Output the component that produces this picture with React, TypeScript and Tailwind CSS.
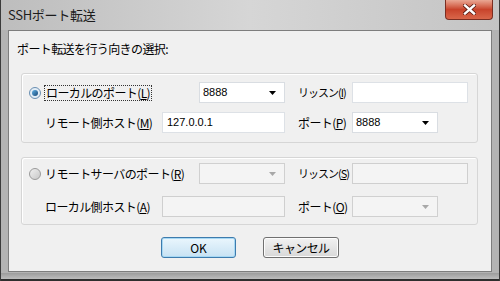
import React from "react";

const jp = "font-['Noto_Sans_CJK_JP','Noto_Sans',sans-serif]";

const Mn = ({ k }: { k: string }) => (
  <span>
    (<u>{k}</u>)
  </span>
);

const Arrow = ({ off }: { off?: boolean }) => (
  <svg width="7" height="4" viewBox="0 0 7 4" className="mr-[8px]">
    <path d="M0 0H7L3.5 4Z" fill={off ? "#a8a8a8" : "#000"} />
  </svg>
);

const Combo = ({ w, value, off }: { w: string; value?: string; off?: boolean }) => (
  <div
    className={`${w} h-[21px] flex items-center justify-between border ${
      off ? "border-[#d0d0d0] bg-[#f4f4f4]" : "border-[#d9dde2] bg-white"
    }`}
  >
    <span className="pl-[3px] text-[11px] tracking-normal font-['Liberation_Sans',sans-serif] text-black">{value}</span>
    <Arrow off={off} />
  </div>
);

const Field = ({ w, value, off }: { w: string; value?: string; off?: boolean }) => (
  <div
    className={`${w} h-[21px] flex items-center border ${
      off ? "border-[#cfcfcf] bg-[#f4f4f4]" : "border-[#dde1e6] bg-white"
    }`}
  >
    <span className="pl-[4px] text-[11px] tracking-normal font-['Liberation_Sans',sans-serif] text-black">{value}</span>
  </div>
);

const Radio = ({ on }: { on?: boolean }) => (
  <div
    className={`w-[12px] h-[12px] shrink-0 rounded-full border flex items-center justify-center ${
      on ? "border-[#6a8fb2] bg-[#e2edf6]" : "border-[#9a9a9a] bg-gradient-to-br from-[#f0f0f0] to-[#c8c8c8]"
    }`}
  >
    {on && <div className="w-[6px] h-[6px] rounded-full bg-gradient-to-br from-[#5fb0e6] to-[#1a4a78]" />}
  </div>
);

const App = () => {
  return (
    <div className={`w-[500px] h-[281px] flex flex-col bg-[#b3b3b3] border-x border-[#3b3b3b] whitespace-nowrap ${jp}`}>
      {/* title bar */}
      <div className="h-[30px] flex justify-between bg-gradient-to-r from-[#bdbdbd] via-[#d6d6d6] to-[#c4c4c4]">
        <span className="pl-[7px] pt-[7px] text-[13px] leading-[16px] tracking-[-0.3px] text-[#1c1c1c]">SSHポート転送</span>
        <div className="w-[48px] h-[20px] mr-[6px] rounded-b-[4px] border border-t-0 border-[#7a2e22] bg-gradient-to-b from-[#e9a794] via-[#c8432b] to-[#d9664a] flex items-center justify-center">
          <svg width="13" height="11" viewBox="0 0 13 11">
            <path d="M2 1.5L11 9.5M11 1.5L2 9.5" stroke="#5a1a10" strokeWidth="4" strokeLinecap="square" />
            <path d="M2 1.5L11 9.5M11 1.5L2 9.5" stroke="#fff" strokeWidth="2.4" strokeLinecap="square" />
          </svg>
        </div>
      </div>

      {/* client area */}
      <div className="ml-[7px] w-[484px] h-[242px] border border-[#7d7d7d] bg-[#f0f0f0] text-[12px] tracking-[-0.6px] text-black">
        <div className="pl-[8px] pt-[11px] leading-[14px]">ポート転送を行う向きの選択:</div>

        {/* group 1 */}
        <div className="mt-[17px] ml-[12px] w-[457px] h-[70px] border border-[#d6d6d6] rounded-[3px] shadow-[inset_1px_1px_0_#fff] flex flex-col gap-[9px] pt-[8px]">
          <div className="flex items-center h-[21px]">
            <div className="w-[177px] pl-[7px] flex items-center">
              <Radio on />
              <span className="ml-[3px] px-[1px] border border-dotted border-[#333] leading-[14px]">
                ローカルのポート<Mn k="L" />
              </span>
            </div>
            <Combo w="w-[86px]" value="8888" />
            <span className="ml-[13px] w-[54px] text-[11px] tracking-[-1px]">
              リッスン<Mn k="I" />
            </span>
            <Field w="w-[116px]" />
          </div>
          <div className="flex items-center h-[21px]">
            <span className="pl-[23px] w-[140px]">
              リモート側ホスト<Mn k="M" />
            </span>
            <Field w="w-[123px]" value="127.0.0.1" />
            <span className="ml-[13px] w-[54px]">
              ポート<Mn k="P" />
            </span>
            <Combo w="w-[86px]" value="8888" />
          </div>
        </div>

        {/* group 2 */}
        <div className="mt-[14px] ml-[12px] w-[457px] h-[68px] border border-[#d6d6d6] rounded-[3px] shadow-[inset_1px_1px_0_#fff] flex flex-col gap-[12px] pt-[5px]">
          <div className="flex items-center h-[21px]">
            <div className="w-[177px] pl-[7px] flex items-center">
              <Radio />
              <span className="ml-[4px] leading-[14px]">
                リモートサーバのポート<Mn k="R" />
              </span>
            </div>
            <Combo w="w-[86px]" off />
            <span className="ml-[13px] w-[54px] text-[11px] tracking-[-1px]">
              リッスン<Mn k="S" />
            </span>
            <Field w="w-[116px]" off />
          </div>
          <div className="flex items-center h-[21px]">
            <span className="pl-[23px] w-[140px]">
              ローカル側ホスト<Mn k="A" />
            </span>
            <Field w="w-[123px]" off />
            <span className="ml-[13px] w-[54px]">
              ポート<Mn k="O" />
            </span>
            <Combo w="w-[86px]" off />
          </div>
        </div>

        {/* buttons */}
        <div className="mt-[12px] flex justify-center gap-[27px]">
          <button className="w-[75px] h-[21px] rounded-[3px] border border-[#3d7bad] bg-gradient-to-b from-[#eaf6fd] to-[#c7e2f3] shadow-[inset_0_0_0_1px_#a6d8f4] text-[12px] leading-[14px] tracking-normal">
            OK
          </button>
          <button className="w-[76px] h-[21px] rounded-[3px] border border-[#707070] bg-gradient-to-b from-[#f2f2f2] to-[#d8d8d8] shadow-[inset_0_0_0_1px_#fcfcfc] text-[12px] leading-[14px]">
            キャンセル
          </button>
        </div>
      </div>

      {/* bottom frame */}
      <div className="mt-[1px] h-[6px] bg-gradient-to-b from-[#9c9c9c] to-[#bdbdbd]" />
      <div className="h-[2px] bg-[#2e2e2e]" />
    </div>
  );
};

export default App;
